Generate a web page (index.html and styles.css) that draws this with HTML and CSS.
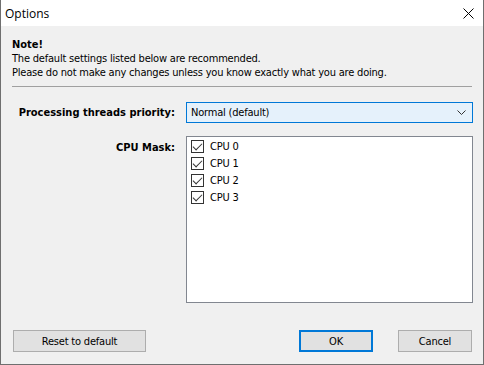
FILE: index.html
```html
<!DOCTYPE html>
<html lang="en">
<head>
  <meta charset="UTF-8">
  <title>Options</title>
  <link rel="stylesheet" href="styles.css">
</head>
<body>
  <div class="window">
    <div class="titlebar">
      <span class="title">Options</span>
      <svg class="close" width="11" height="11" viewBox="0 0 11 11"><path d="M0.5 0.5L10.5 10.5M10.5 0.5L0.5 10.5" stroke="#000" stroke-width="1"/></svg>
    </div>

    <div class="content">
      <div class="note">
        <p class="note-title">Note!</p>
        <p>The default settings listed below are recommended.</p>
        <p>Please do not make any changes unless you know exactly what you are doing.</p>
      </div>
      <div class="divider"></div>

      <div class="form">
        <label class="label label-combo">Processing threads priority:</label>
        <div class="combo">
          <span>Normal (default)</span>
          <svg width="9" height="5" viewBox="0 0 9 5"><path d="M0.5 0.5L4.5 4.5L8.5 0.5" fill="none" stroke="#333" stroke-width="1"/></svg>
        </div>

        <label class="label label-list">CPU Mask:</label>
        <div class="listbox">
          <div class="cpu-row"><span class="check"></span>CPU 0</div>
          <div class="cpu-row"><span class="check"></span>CPU 1</div>
          <div class="cpu-row"><span class="check"></span>CPU 2</div>
          <div class="cpu-row"><span class="check"></span>CPU 3</div>
        </div>
      </div>

      <div class="buttons">
        <button class="btn btn-reset">Reset to default</button>
        <div class="right-buttons">
          <button class="btn btn-ok">OK</button>
          <button class="btn">Cancel</button>
        </div>
      </div>
    </div>
  </div>
</body>
</html>
```

FILE: styles.css
```css
* {
  margin: 0;
  padding: 0;
  box-sizing: border-box;
}

body {
  font-family: 'DejaVu Sans Condensed', 'DejaVu Sans', sans-serif;
  font-stretch: condensed;
  font-size: 11px;
  letter-spacing: -0.2px;
  color: #000;
  background: #fff;
}

.window {
  width: 484px;
  height: 365px;
  background: #f0f0f0;
  border: 1px solid #6f6f6f;
  border-top: none;
  display: flex;
  flex-direction: column;
}

/* Title bar */
.titlebar {
  height: 26px;
  background: #fff;
  display: flex;
  align-items: center;
  justify-content: space-between;
  padding: 0 9px 0 4px;
}

.title {
  font-family: 'Open Sans', sans-serif;
  font-stretch: normal;
  font-size: 12px;
  letter-spacing: 0;
}

.close {
  display: block;
}

/* Main content */
.content {
  flex: 1;
  display: flex;
  flex-direction: column;
  padding: 0 10px 12px 11px;
}

.note {
  padding-top: 12px;
  line-height: 14px;
}

.note-title {
  font-weight: bold;
  letter-spacing: 0;
}

.divider {
  margin-top: 6px;
  height: 1px;
  background: #a0a0a0;
  margin-right: 1px;
}

.form {
  display: grid;
  grid-template-columns: 163px 1fr;
  column-gap: 11px;
  row-gap: 13px;
  margin-top: 15px;
}

.label {
  font-weight: bold;
  text-align: right;
  letter-spacing: 0;
}

.label-combo {
  align-self: center;
}

.label-list {
  padding-top: 5px;
}

.combo {
  height: 21px;
  background: #e5f1fb;
  border: 1px solid #0078d7;
  display: flex;
  align-items: center;
  justify-content: space-between;
  padding: 0 6px 0 4px;
}

.listbox {
  height: 167px;
  background: #fff;
  border: 1px solid #828790;
  padding: 1px 0 0 4px;
}

.cpu-row {
  height: 17px;
  display: flex;
  align-items: center;
  gap: 6px;
}

.check {
  width: 13px;
  height: 13px;
  border: 1px solid #333;
  background: #fff;
  position: relative;
}

.check::after {
  content: '';
  position: absolute;
  left: 3px;
  top: 0px;
  width: 4px;
  height: 8px;
  border-right: 1px solid #333;
  border-bottom: 1px solid #333;
  transform: rotate(45deg);
}

/* Bottom buttons */
.buttons {
  margin-top: auto;
  display: flex;
  justify-content: space-between;
  padding: 0 1px 0 1px;
}

.right-buttons {
  display: flex;
  gap: 25px;
}

.btn {
  font-family: 'DejaVu Sans Condensed', 'DejaVu Sans', sans-serif;
  font-stretch: condensed;
  font-size: 11px;
  letter-spacing: -0.2px;
  height: 22px;
  width: 74px;
  background: #e1e1e1;
  border: 1px solid #adadad;
  color: #000;
}

.btn-reset {
  width: 133px;
}

.btn-ok {
  border: 2px solid #0078d7;
}
```
